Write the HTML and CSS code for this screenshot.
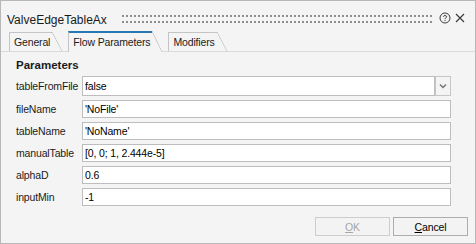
FILE: index.html
```html
<!DOCTYPE html>
<html lang="en">
<head>
  <meta charset="UTF-8" />
  <title>ValveEdgeTableAx</title>
  <link rel="stylesheet" href="styles.css">
</head>
<body>
  <div class="dialog">
    <div class="titlebar">
      <span class="title">ValveEdgeTableAx</span>
      <div class="grip"></div>
      <svg class="help" width="12" height="12" viewBox="0 0 12 12">
        <circle cx="6" cy="6" r="5" fill="none" stroke="#3a3a3a" stroke-width="1"/>
        <path d="M4.3 4.7 C4.3 3.2 7.7 3.2 7.7 4.7 C7.7 5.9 6 5.8 6 7.2" fill="none" stroke="#3a3a3a" stroke-width="1"/>
        <rect x="5.5" y="8" width="1" height="1" fill="#3a3a3a"/>
      </svg>
      <svg class="close" width="10" height="10" viewBox="0 0 10 10">
        <path d="M1 1 L9 9 M9 1 L1 9" stroke="#3a3a3a" stroke-width="1.1"/>
      </svg>
    </div>

    <div class="tabs">
      <div class="tab"><span class="tab-label">General</span></div>
      <div class="tab active"><span class="tab-label">Flow Parameters</span></div>
      <div class="tab"><span class="tab-label">Modifiers</span></div>
    </div>

    <div class="page">
      <h2>Parameters</h2>
      <div class="props">
        <label>tableFromFile</label>
        <div class="combo">
          <span class="combo-value">false</span>
          <span class="combo-btn">
            <svg width="8" height="6" viewBox="0 0 8 6"><path d="M1 1.5 L4 4.5 L7 1.5" fill="none" stroke="#777" stroke-width="1.5"/></svg>
          </span>
        </div>

        <label>fileName</label>
        <div class="field">'NoFile'</div>

        <label>tableName</label>
        <div class="field">'NoName'</div>

        <label>manualTable</label>
        <div class="field">[0, 0; 1, 2.444e-5]</div>

        <label>alphaD</label>
        <div class="field">0.6</div>

        <label>inputMin</label>
        <div class="field">-1</div>
      </div>
    </div>

    <div class="buttons">
      <button class="btn" disabled><u>O</u>K</button>
      <button class="btn"><u>C</u>ancel</button>
    </div>
  </div>
</body>
</html>
```

FILE: styles.css
```css
* {
  box-sizing: border-box;
}

body {
  margin: 0;
  font-family: "Liberation Sans", Arial, sans-serif;
  font-size: 10.5px;
  letter-spacing: -0.15px;
  color: #1b1b1b;
}

.dialog {
  width: 476px;
  height: 244px;
  border: 1px solid #b8b8b8;
  background-color: #f4f4f4;
  display: flex;
  flex-direction: column;
}

/* title bar */
.titlebar {
  height: 30px;
  display: flex;
  align-items: flex-start;
}

.title {
  margin: 12px 0 0 6px;
  font-size: 12px;
  letter-spacing: 0;
  line-height: 14px;
  color: #1a1a1a;
}

.grip {
  flex: 1;
  height: 8px;
  margin: 14px 7px 0 15px;
  background:
    linear-gradient(to right, #8e8e8e 2px, transparent 2px) 0 0 / 4px 2px repeat-x,
    linear-gradient(to right, #8e8e8e 2px, transparent 2px) 0 6px / 4px 2px repeat-x;
}

.help {
  margin-top: 11px;
}

.close {
  margin: 12px 10px 0 4px;
}

/* tabs */
.tabs {
  height: 21px;
  display: flex;
  align-items: flex-end;
  gap: 6px;
  padding-left: 8px;
  border-bottom: 1px solid #dadada;
}

.tab {
  height: 19px;
  display: flex;
  background-color: #f4f4f4;
}

.tab::after {
  content: "";
  width: 10px;
  background: linear-gradient(to top right, transparent calc(50% - 0.7px), #c4c4c4 50%, transparent calc(50% + 0.7px));
}

.tab-label {
  padding: 0 2px 0 4px;
  line-height: 18px;
  border-left: 1px solid #c4c4c4;
  border-top: 1px solid #c4c4c4;
}

.tab.active {
  height: 21px;
  margin-bottom: -1px;
}

.tab.active .tab-label {
  line-height: 18px;
  padding-bottom: 1px;
  border-top: 2px solid #2878b4;
}

/* property page */
.page {
  padding: 5px 24px 0 15px;
}

h2 {
  margin: 0 0 3px;
  font-size: 11.5px;
  letter-spacing: 0;
  line-height: 16px;
  font-weight: bold;
  color: #1a1a1a;
}

.props {
  display: grid;
  grid-template-columns: 66px 1fr;
  grid-template-rows: 20px repeat(5, 18px);
  row-gap: 4px;
}

.props label {
  display: flex;
  align-items: center;
}

.field {
  height: 18px;
  line-height: 16px;
  padding: 0 2px;
  border: 1px solid #bdbdbd;
  background-color: #fff;
  color: #000;
}

.combo {
  display: flex;
  height: 20px;
}

.combo-value {
  flex: 1;
  line-height: 18px;
  padding: 0 2px;
  border: 1px solid #bdbdbd;
  background-color: #fff;
  color: #000;
}

.combo-btn {
  width: 16px;
  display: flex;
  align-items: center;
  justify-content: center;
  border: 1px solid #c6c6c6;
  background-color: #f4f4f4;
}

/* dialog buttons */
.buttons {
  margin-top: auto;
  display: flex;
  justify-content: flex-end;
  gap: 3px;
  padding: 0 7px 7px 0;
}

.btn {
  width: 75px;
  height: 19px;
  padding: 0;
  font-family: inherit;
  font-size: 10.5px;
  letter-spacing: inherit;
  color: #000;
  background-color: #f3f3f3;
  border: 1px solid #adadad;
}

.btn:disabled {
  color: #a6a6a6;
  border-color: #cdcdcd;
}
```
